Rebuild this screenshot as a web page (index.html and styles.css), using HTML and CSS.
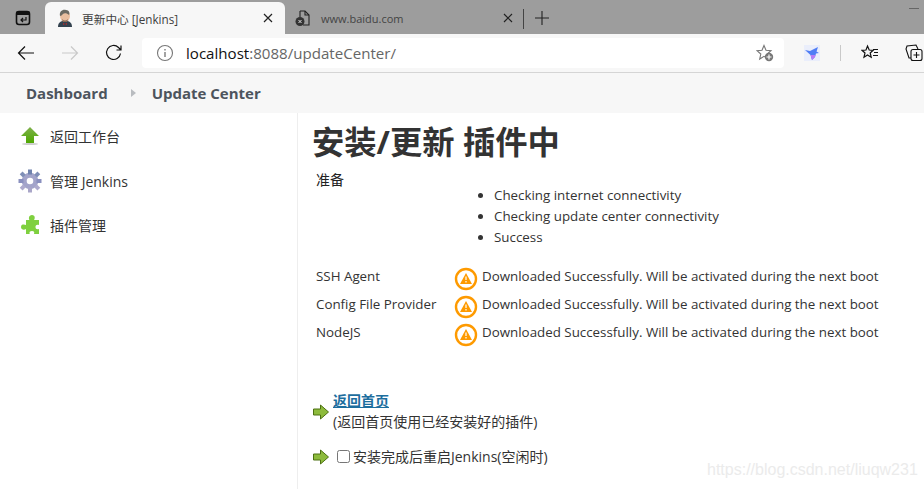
FILE: index.html
```html
<!DOCTYPE html>
<html lang="zh">
<head>
<meta charset="utf-8">
<title>更新中心 [Jenkins]</title>
<link rel="stylesheet" href="styles.css">
</head>
<body>
<div class="tabstrip">
  <div class="tabs-btn">
    <svg width="16" height="16" viewBox="0 0 16 16"><rect x="1.500" y="1.500" width="13" height="13" rx="2.500" fill="none" stroke="#111" stroke-width="1.600"/><rect x="1.500" y="1.500" width="13" height="3.500" fill="#111"/><path d="M11 7v3H6M8 8l-2 2 2 2" fill="none" stroke="#111" stroke-width="1.200"/></svg>
  </div>
  <div class="tab active">
    <svg class="favicon" width="16" height="18" viewBox="0 0 16 18">
      <path d="M1 18c0-4 2-5 4-6h6c2 1 4 2 4 6z" fill="#33424f"/>
      <ellipse cx="8" cy="7" rx="5" ry="6" fill="#e8bfa0"/>
      <path d="M3 7C2 2 6 0 9 1c3 0 4 3 3 5-2-2-5-2-6-1-1 1-2 2-3 2z" fill="#6a6a62"/>
      <path d="M5 10c2 2 4 2 6 0l-1 3H6z" fill="#8c6a55"/>
      <path d="M6 14l2 1 2-1v2l-2-1-2 1z" fill="#b02a2a"/>
    </svg>
    <span class="tab-title">更新中心 [Jenkins]</span>
    <svg class="tab-close" width="10" height="10" viewBox="0 0 10 10"><path d="M1 1l8 8M9 1l-8 8" stroke="#222" stroke-width="1.200"/></svg>
  </div>
  <div class="tab inactive">
    <svg class="favicon" width="16" height="18" viewBox="0 0 16 18"><path d="M5 2h5l4 4v10H8" fill="none" stroke="#222" stroke-width="1.100"/><path d="M10 2v4h4M5 2v6" fill="none" stroke="#222" stroke-width="1.100"/><circle cx="5" cy="12.500" r="4.500" fill="#333"/><path d="M3.500 11l3 3M6.500 11l-3 3" stroke="#ddd"/></svg>
    <span class="tab-title dim">www.baidu.com</span>
    <svg class="tab-close" width="10" height="10" viewBox="0 0 10 10"><path d="M1 1l8 8M9 1l-8 8" stroke="#222" stroke-width="1.200"/></svg>
  </div>
  <div class="tab-divider"></div>
  <svg class="newtab" width="16" height="16" viewBox="0 0 16 16"><path d="M8 1v14M1 8h14" stroke="#222" stroke-width="1.100"/></svg>
  <div class="minimize"></div>
</div>

<div class="toolbar">
  <div class="nav">
    <svg width="18" height="16" viewBox="0 0 18 16"><path d="M17 8H1.500M8 1.500L1.500 8 8 14.500" fill="none" stroke="#111" stroke-width="1.200"/></svg>
    <svg width="18" height="16" viewBox="0 0 18 16"><path d="M1 8h15.500M10 1.500L16.500 8 10 14.500" fill="none" stroke="#c9c9c9" stroke-width="1.200"/></svg>
    <svg width="18" height="18" viewBox="0 0 18 18"><path d="M15.500 9.500A7 7 0 1 1 13.500 3.500L16 6M16 1.500V6H11.500" fill="none" stroke="#111" stroke-width="1.200"/></svg>
  </div>
  <div class="address">
    <svg class="info" width="18" height="18" viewBox="0 0 18 18"><circle cx="9" cy="9" r="7.500" fill="none" stroke="#777" stroke-width="1.100"/><path d="M9 8v5M9 5v1.500" stroke="#666" stroke-width="1.200"/></svg>
    <span class="url"><span class="host">localhost</span>:8088/updateCenter/</span>
    <svg class="fav-add" width="18" height="18" viewBox="0 0 18 18"><path d="M8 1.500l2 4.800 5 .4-3.800 3.300 1.100 4.900L8 12.300 3.700 15l1.100-5L1 6.700l5-.4z" fill="none" stroke="#777" stroke-width="1.100"/><circle cx="13" cy="13" r="4.200" fill="#777"/><path d="M13 10.500v5M10.500 13h5" stroke="#fff" stroke-width="1.200"/></svg>
  </div>
  <div class="extensions">
    <div class="ext-bird">
      <svg width="16" height="16" viewBox="0 0 16 16"><path d="M1 5l5 1 8-4-1.500 4.500L15 8l-3 .5-1 3.500-3 3-1.500-5z" fill="#4f7df5"/><path d="M6.500 10l1.500 5 3-3 .5-2z" fill="#b77cf5"/></svg>
    </div>
    <div class="ext-sep"></div>
    <svg width="18" height="18" viewBox="0 0 18 18"><path d="M6.500 2l1.700 4 4 .3-3 2.700 1 4.200-3.700-2.300L3 13.200l1-4.200-3-2.700 4-.3z" fill="none" stroke="#111" stroke-width="1.200"/><path d="M12 5.500h5M13 8.500h4M12 11.500h5" stroke="#111" stroke-width="1.100"/></svg>
    <svg width="18" height="18" viewBox="0 0 18 18"><path d="M6 14H4L1 5 2 2l9-1 2 4" fill="none" stroke="#111" stroke-width="1.100"/><rect x="6" y="5.500" width="11" height="11" rx="2" fill="#f7f7f7" stroke="#111" stroke-width="1.100"/><path d="M11.500 8v6M8.500 11h6" stroke="#111" stroke-width="1.100"/></svg>
  </div>
</div>

<nav class="breadcrumbs">
  <a class="crumb">Dashboard</a>
  <svg class="crumb-arrow" width="5" height="8" viewBox="0 0 5 8"><path d="M0 0l5 4-5 4z" fill="#b9bcc0"/></svg>
  <a class="crumb">Update Center</a>
</nav>

<div class="page">
  <aside class="sidebar">
    <div class="task">
      <svg width="24" height="24" viewBox="0 0 24 24"><defs><linearGradient id="g1" x1="0" y1="0" x2="0" y2="1"><stop offset="0" stop-color="#7fb04c"/><stop offset="1" stop-color="#4fa802"/></linearGradient></defs><path d="M12 3l9 9h-5v7H8v-7H3z" fill="url(#g1)"/><ellipse cx="12" cy="20" rx="8" ry="1" fill="#ccc"/></svg>
      <span>返回工作台</span>
    </div>
    <div class="task">
      <svg width="24" height="24" viewBox="0 0 24 24"><circle cx="12" cy="12" r="5.800" fill="none" stroke="#a3a4ca" stroke-width="5"/><g fill="#8a90bf"><rect x="10" y="0.500" width="4" height="5" fill="#6f82ad"/><rect x="10" y="18.500" width="4" height="5" fill="#a9a6c8"/><rect x="0.500" y="10" width="5" height="4"/><rect x="18.500" y="10" width="5" height="4"/><rect x="2.500" y="3.500" width="4.500" height="4" transform="rotate(45 4.700 5.500)" fill="#7f8fb7"/><rect x="17" y="3.500" width="4.500" height="4" transform="rotate(-45 19.200 5.500)" fill="#7f8fb7"/><rect x="2.500" y="16.500" width="4.500" height="4" transform="rotate(-45 4.700 18.500)" fill="#aeabcd"/><rect x="17" y="16.500" width="4.500" height="4" transform="rotate(45 19.200 18.500)" fill="#aeabcd"/></g></svg>
      <span>管理 Jenkins</span>
    </div>
    <div class="task">
      <svg width="24" height="24" viewBox="0 0 24 24"><path d="M8 7h3.500c-1-1-1-5 2.500-5s3 4 2 5H21v5c-2-.5-3.500 0-3.500 2s1.500 2.700 3.500 2v5h-5c.7-2 0-3-2-3s-3 1-2.300 3H8v-5C6.500 17 3 17.200 3 14s3.500-2.500 5-2z" fill="#7fd03f"/></svg>
      <span>插件管理</span>
    </div>
  </aside>

  <main class="content">
    <h1>安装/更新 插件中</h1>
    <div class="prep">准备</div>
    <ul class="checks">
      <li>Checking internet connectivity</li>
      <li>Checking update center connectivity</li>
      <li>Success</li>
    </ul>
    <div class="results">
      <div class="result">
        <span class="plugin">SSH Agent</span>
        <svg class="warn" width="24" height="24" viewBox="0 0 24 24"><circle cx="12" cy="12" r="10" fill="#fff" stroke="#fe9a00" stroke-width="2.400"/><path d="M12 6l6 11H6z" fill="#fe9a00"/><path d="M12 9.500v3.500M12 14v1.500" stroke="#fff" stroke-width="1.200"/></svg>
        <span class="message">Downloaded Successfully. Will be activated during the next boot</span>
      </div>
      <div class="result">
        <span class="plugin">Config File Provider</span>
        <svg class="warn" width="24" height="24" viewBox="0 0 24 24"><circle cx="12" cy="12" r="10" fill="#fff" stroke="#fe9a00" stroke-width="2.400"/><path d="M12 6l6 11H6z" fill="#fe9a00"/><path d="M12 9.500v3.500M12 14v1.500" stroke="#fff" stroke-width="1.200"/></svg>
        <span class="message">Downloaded Successfully. Will be activated during the next boot</span>
      </div>
      <div class="result">
        <span class="plugin">NodeJS</span>
        <svg class="warn" width="24" height="24" viewBox="0 0 24 24"><circle cx="12" cy="12" r="10" fill="#fff" stroke="#fe9a00" stroke-width="2.400"/><path d="M12 6l6 11H6z" fill="#fe9a00"/><path d="M12 9.500v3.500M12 14v1.500" stroke="#fff" stroke-width="1.200"/></svg>
        <span class="message">Downloaded Successfully. Will be activated during the next boot</span>
      </div>
    </div>
    <div class="action first">
      <svg width="16" height="16" viewBox="0 0 16 16"><path d="M.5 5h7V1l8 7-8 7v-4h-7z" fill="#8dbb3c" stroke="#4c7012"/></svg>
      <div class="action-text">
        <a class="home-link">返回首页</a>
        <div>(返回首页使用已经安装好的插件)</div>
      </div>
    </div>
    <div class="action second">
      <svg width="16" height="16" viewBox="0 0 16 16"><path d="M.5 5h7V1l8 7-8 7v-4h-7z" fill="#8dbb3c" stroke="#4c7012"/></svg>
      <label class="restart"><input type="checkbox"><span>安装完成后重启Jenkins(空闲时)</span></label>
    </div>
  </main>
</div>
<div class="watermark">https://blog.csdn.net/liuqw231</div>
</body>
</html>
```

FILE: styles.css
```css
html, body {
  margin: 0;
  height: 489px;
  overflow: hidden;
  background: #fff;
}
body {
  font-family: "Open Sans", "Noto Sans CJK SC", sans-serif;
  font-size: 14px;
  color: #333;
  position: relative;
}
svg { display: block; flex: none; }

.tabstrip {
  height: 34px;
  background: #9d9d9d;
  display: flex;
  align-items: flex-end;
  position: relative;
  box-sizing: border-box;
}
.tabs-btn {
  width: 45px;
  height: 32px;
  display: flex;
  align-items: center;
  justify-content: center;
  box-sizing: border-box;
}
.tab {
  height: 32px;
  width: 240px;
  box-sizing: border-box;
  display: flex;
  align-items: center;
  padding: 0 12px;
  border-radius: 6px 6px 0 0;
}
.tab.inactive { padding: 0 10px; width: 238px; }
.tab.active { background: #f7f7f7; color: #3d3d3d; }
.tab-title { margin-left: 9px; flex: 1; white-space: nowrap; font-size: 11.700px; }
.tab-title.dim { color: #444; margin-left: 10px; font-size: 11px; }
.tab-divider {
  width: 1px;
  height: 20px;
  background: #444;
  margin: 0 0 5px 0;
}
.newtab { margin: 0 0 8px 10px; }
.minimize {
  position: absolute;
  right: 5px;
  top: 8px;
  width: 10px;
  height: 1px;
  background: #666;
}

.toolbar {
  height: 39px;
  background: #f7f7f7;
  border-bottom: 1px solid #d5d5d5;
  box-sizing: border-box;
  display: flex;
  align-items: center;
  padding: 0 0 1px 17px;
  overflow: hidden;
}
.nav {
  display: flex;
  align-items: center;
  gap: 26px;
  width: 125px;
  flex: none;
}
.address {
  width: 642px;
  height: 30px;
  flex: none;
  background: #fff;
  border-radius: 4px;
  display: flex;
  align-items: center;
  box-sizing: border-box;
  padding: 0 10px 0 14px;
  font-size: 15.100px;
  color: #666;
}
.url { margin-left: 12px; flex: 1; }
.host { color: #111; }
.extensions {
  display: flex;
  align-items: center;
  flex: none;
  margin-left: 20px;
}
.ext-bird {
  width: 16px;
  height: 16px;
  background: #eaeefb;
}
.ext-sep {
  width: 1px;
  height: 16px;
  background: #c9c9c9;
  margin: 0 20px;
}
.extensions svg + svg { margin-left: 26px; }

.breadcrumbs {
  height: 40px;
  background: #f7f7f7;
  display: flex;
  align-items: center;
  padding-left: 26px;
  font-size: 15px;
  font-weight: 700;
  color: #4d545d;
}
.crumb-arrow { margin: 0 16px 0 23px; }

.page {
  display: flex;
  height: 376px;
}
.sidebar {
  width: 298px;
  box-sizing: border-box;
  border-right: 1px solid #eee;
  padding-top: 11px;
  flex: none;
}
.task {
  height: 24px;
  display: flex;
  align-items: center;
  gap: 8px;
  margin: 0 0 20.500px 18px;
  font-size: 14px;
}
.content {
  padding: 9px 0 0 14px;
  flex: 1;
  min-width: 0;
}
h1 {
  margin: 0;
  font-size: 32.300px;
  line-height: 38px;
  color: #333;
  font-weight: 700;
  white-space: nowrap;
}
.prep {
  margin: 11px 0 0 4px;
  font-size: 14px;
  line-height: 18px;
  color: #222;
}
.checks {
  margin: -4px 0 0;
  padding: 0 0 0 182px;
  font-size: 13.350px;
  line-height: 21px;
}
.results {
  margin-top: 16px;
  padding-left: 4px;
}
.result {
  display: flex;
  align-items: center;
  height: 28px;
  font-size: 13.350px;
  white-space: nowrap;
}
.plugin { width: 138px; flex: none; position: relative; top: -2px; }
.warn { margin: 0 4px 0 0; position: relative; top: 1px; }
.message { position: relative; top: -2px; }
.action {
  display: flex;
  align-items: center;
  gap: 4px;
  font-size: 14px;
  margin-left: 1px;
}
.action svg { margin-top: 2px; }
.action.first { margin-top: 42px; }
.action.second { margin-top: 14px; }
.action-text { line-height: 21px; }
.home-link {
  color: #1d6e9e;
  font-weight: 700;
  text-decoration: underline;
}
.restart {
  display: flex;
  align-items: center;
  gap: 3px;
}
.restart input {
  margin: 0 0 0 4px;
  width: 13px;
  height: 13px;
}
.watermark {
  position: absolute;
  left: 707px;
  top: 461px;
  font-family: "Liberation Sans", sans-serif;
  font-size: 16px;
  color: #ebebeb;
  white-space: nowrap;
}
```
